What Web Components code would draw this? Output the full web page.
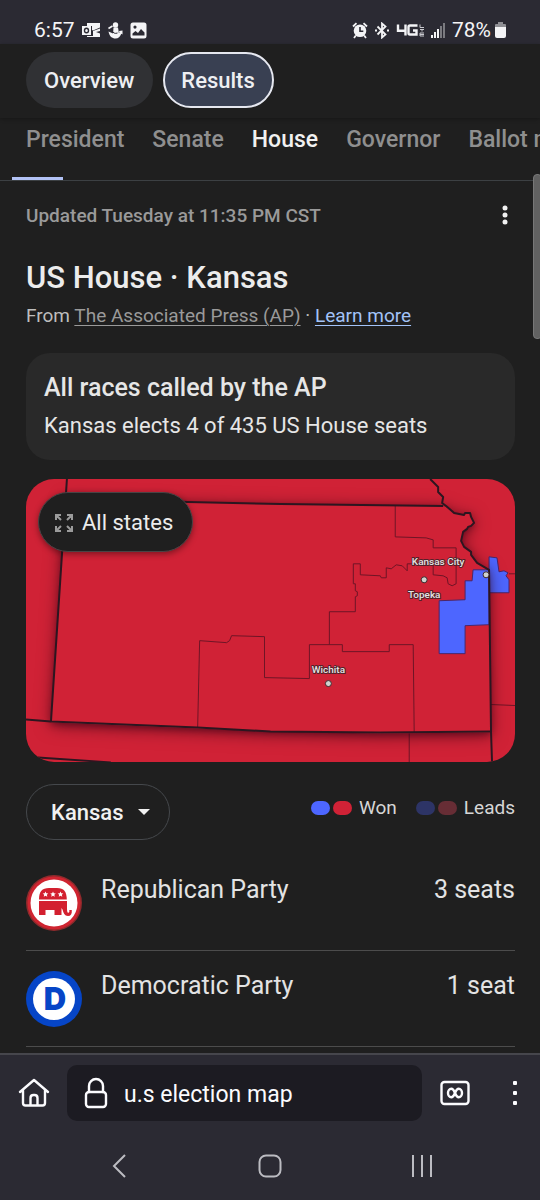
<!DOCTYPE html>
<html lang="en">
<head>
  <meta charset="utf-8">
  <meta name="viewport" content="width=device-width, initial-scale=1">
  <title>u.s election map</title>
  <style>
    html {
      background-color: #1f1f1f;
    }

    body {
      margin: 0;
      min-height: 100vh;
      display: flex;
      flex-direction: column;
      overflow-x: hidden;
      background-color: #1f1f1f;
      color: #e8e8e8;
      font-family: Roboto, "Liberation Sans", sans-serif;
    }

    main {
      flex: 1;
      position: relative;
    }
  </style>
</head>
<body>
  <st-status-bar time="6:57" battery="78%"></st-status-bar>
  <main>
    <st-chip-bar>
      <st-chip>Overview</st-chip>
      <st-chip selected>Results</st-chip>
    </st-chip-bar>
    <st-race-tabs></st-race-tabs>
    <st-results-panel>
      <st-update-line slot="top">Updated Tuesday at 11:35 PM CST</st-update-line>
      <st-race-title slot="top">US House · Kansas</st-race-title>
      <st-called-card slot="top">
        <span slot="heading">All races called by the AP</span>
        Kansas elects 4 of 435 US House seats
      </st-called-card>
      <st-district-map></st-district-map>
      <st-map-controls></st-map-controls>
      <st-party-row party="rep" seats="3 seats">Republican Party</st-party-row>
      <st-party-row party="dem" seats="1 seat">Democratic Party</st-party-row>
    </st-results-panel>
    <st-scroll-thumb></st-scroll-thumb>
  </main>
  <st-browser-bar query="u.s election map"></st-browser-bar>
  <st-system-nav></st-system-nav>

  <script>
    class StatusBar extends HTMLElement {
      constructor() {
        super();

        this.attachShadow({ mode: 'open' });
        this.shadowRoot.innerHTML = `
          <style>
            :host {
              display: flex;
              justify-content: space-between;
              align-items: center;
              height: 28px;
              padding: 16px 34px 0 34px;
              background-color: #2b2a33;
              color: #f4f4f6;
              font-size: 21px;
              line-height: 28px;
            }

            .group {
              display: flex;
              align-items: center;
              gap: 7px;
            }

            .power {
              display: flex;
              align-items: center;
              gap: 4px;
            }

            svg {
              display: block;
              fill: #f4f4f6;
            }
          </style>
          <div class="group">
            <span>${this.getAttribute('time')}</span>
            <svg width="19" height="16" viewBox="0 0 19 16">
              <path d="M5 1h13v4.500l-7 3-1-.5V4H5z"/>
              <path d="M0 4h9v9H0zM18 6.500v2.500l-4 1 4 1.500V15H5v-1h6V9z"/>
              <ellipse cx="4.500" cy="8.500" rx="2" ry="2.300" fill="none" stroke="#2b2a33" stroke-width="1.400"/>
            </svg>
            <svg width="15" height="17" viewBox="0 0 15 17">
              <circle cx="7.500" cy="3" r="2.700"/>
              <path d="M5.500 5.500h4.500l.5 3 .5 3.500H5z"/>
              <path d="M.5 9.500l3.500 1.500c2 1.500 5 1.500 7.500-.5l-.5-1.500 3.500-.5v4l-1.200-.8c-1.300 3-2.800 4.800-5.800 4.800-3.500 0-6-2-7-7z"/>
              <path d="M.5 6.500L4.500 4" stroke="#f4f4f6" stroke-width="1.600"/>
              <path d="M4 8.500c1 2.500 3 3.500 5.500 2.500" fill="none" stroke="#2b2a33"/>
            </svg>
            <svg width="17" height="17" viewBox="0 0 17 17">
              <path fill-rule="evenodd" d="M3 .5h11a2.500 2.500 0 0 1 2.500 2.500v11a2.500 2.500 0 0 1-2.500 2.500H3A2.500 2.500 0 0 1 .5 14V3A2.500 2.500 0 0 1 3 .5zM2.500 13.500h12v-3l-3.500-3.500-3 4-2.500-2-3 2.500zM5 3.500a1.600 1.600 0 1 0 0 3.200 1.600 1.600 0 0 0 0-3.200z"/>
            </svg>
          </div>
          <div class="group">
            <svg width="16" height="17" viewBox="0 0 16 17">
              <circle cx="8" cy="8.800" r="6.300"/>
              <path d="M1 4.500L4.500 1.200M15 4.500l-3.500-3.300M3.800 13.500L2 16M12.200 13.500L14 16" fill="none" stroke="#f4f4f6" stroke-width="1.800"/>
              <path d="M8 5v4.300h3.300" fill="none" stroke="#2b2a33" stroke-width="1.600"/>
            </svg>
            <svg width="14" height="17" viewBox="0 0 14 17">
              <path d="M2.500 4.500l8 8-3.500 3V1.500l3.500 3-8 8" fill="none" stroke="#f4f4f6" stroke-width="1.800"/>
              <path d="M0 7.500h2v2H0zM12 7.500h2v2h-2z"/>
            </svg>
            <svg width="28" height="14" viewBox="0 0 28 14">
              <path d="M2 1.500v6.200h8.500M9.500 1.500v11M21.500 2.500H14q-1.500 0-1.500 1.500v6q0 1.500 1.500 1.500h6.500V7.500H17" fill="none" stroke="#f4f4f6" stroke-width="2.400"/>
              <path d="M24 1.500v3h4M24 6.500h4M26 6.500v2M28 10h-4v3h4M24 11.500h4" fill="none" stroke="#c9c9cf" stroke-width="1"/>
            </svg>
            <svg width="14" height="15" viewBox="0 0 14 15">
              <path d="M0 12h2v3H0zM3 9h2v6H3zM6 6h2v9H6z"/>
              <path d="M9 3h2v12H9zM12 0h2v15h-2z" opacity=".4"/>
            </svg>
            <div class="power">
              <span>${this.getAttribute('battery')}</span>
              <svg width="11" height="16" viewBox="0 0 11 16">
                <path d="M3 0h5v2h2q1 0 1 1v3H0V3q0-1 1-1h2z" opacity=".5"/>
                <path d="M0 5h11v9q0 2-2 2H2q-2 0-2-2z"/>
              </svg>
            </div>
          </div>
        `;
      }
    }

    class ChipBar extends HTMLElement {
      constructor() {
        super();

        this.attachShadow({ mode: 'open' });
        this.shadowRoot.innerHTML = `
          <style>
            :host {
              display: flex;
              gap: 10px;
              padding: 8px 26px 10px;
              box-shadow: 0 1px 4px rgba(0, 0, 0, .3);
            }
          </style>
          <slot></slot>
        `;
      }
    }

    class Chip extends HTMLElement {
      constructor() {
        super();

        this.attachShadow({ mode: 'open' });
        this.shadowRoot.innerHTML = `
          <style>
            :host {
              display: block;
            }

            button {
              height: 56px;
              padding: 2px 17px 0 16px;
              border: 2px solid transparent;
              border-radius: 28px;
              background-color: #303134;
              color: #eeeff2;
              font: 500 22px/28px Roboto, "Liberation Sans", sans-serif;
            }

            :host([selected]) button {
              border-color: #e6e8f0;
              background-color: #394052;
            }
          </style>
          <button><slot></slot></button>
        `;
      }
    }

    class RaceTabs extends HTMLElement {
      constructor() {
        super();

        this.races = ['President', 'Senate', 'House', 'Governor', 'Ballot measures'];
        this.current = 'House';

        this.attachShadow({ mode: 'open' });
        this.shadowRoot.innerHTML = `
          <style>
            :host {
              display: block;
              position: relative;
              border-bottom: 1px solid #3c4043;
            }

            nav {
              display: flex;
              gap: 28px;
              padding: 8px 0 26px 26px;
              overflow: hidden;
            }

            a {
              flex: none;
              color: #8f8f8f;
              font-size: 23px;
              font-weight: 500;
              line-height: 28px;
              text-decoration: none;
              white-space: nowrap;
            }

            a[aria-current] {
              color: #f1f1f1;
            }

            .indicator {
              position: absolute;
              left: 12px;
              bottom: 0;
              width: 51px;
              height: 3px;
              background-color: #b2c2f5;
            }
          </style>
          <nav>
            ${this.races.map(race => `<a href="#"${race === this.current ? ' aria-current="page"' : ''}>${race}</a>`).join('')}
          </nav>
          <div class="indicator"></div>
        `;
      }
    }

    class ResultsPanel extends HTMLElement {
      constructor() {
        super();

        this.attachShadow({ mode: 'open' });
        this.shadowRoot.innerHTML = `
          <style>
            :host {
              display: block;
              padding: 21px 25px 6px 26px;
            }
          </style>
          <slot name="top"></slot>
          <slot></slot>
        `;
      }
    }

    class UpdateLine extends HTMLElement {
      constructor() {
        super();

        this.attachShadow({ mode: 'open' });
        this.shadowRoot.innerHTML = `
          <style>
            :host {
              display: flex;
              justify-content: space-between;
              align-items: center;
              color: #9a9a9a;
              font-size: 19px;
              font-weight: 500;
              line-height: 28px;
            }

            button {
              display: block;
              padding: 0;
              border: none;
              background: none;
            }

            svg {
              display: block;
            }
          </style>
          <span><slot></slot></span>
          <button aria-label="More options">
            <svg width="20" height="28" viewBox="0 0 20 28" fill="#f1f1f1">
              <circle cx="10" cy="6" r="2.500"/>
              <circle cx="10" cy="13" r="2.500"/>
              <circle cx="10" cy="20" r="2.500"/>
            </svg>
          </button>
        `;
      }
    }

    class RaceTitle extends HTMLElement {
      constructor() {
        super();

        this.attachShadow({ mode: 'open' });
        this.shadowRoot.innerHTML = `
          <style>
            :host {
              display: block;
              margin-top: 28px;
            }

            h1 {
              margin: 0;
              color: #ececec;
              font-size: 31px;
              font-weight: 500;
              line-height: 40px;
            }

            p {
              margin: 4px 0 0;
              color: #bdbdbd;
              font-size: 19px;
              line-height: 28px;
            }

            a {
              text-underline-offset: 3px;
              text-decoration-thickness: 1px;
            }

            .source {
              color: #9a9a9a;
            }

            .more {
              color: #a3c3f8;
            }
          </style>
          <h1><slot></slot></h1>
          <p>From <a class="source" href="#">The Associated Press (AP)</a> · <a class="more" href="#">Learn more</a></p>
        `;
      }
    }

    class CalledCard extends HTMLElement {
      constructor() {
        super();

        this.attachShadow({ mode: 'open' });
        this.shadowRoot.innerHTML = `
          <style>
            :host {
              display: block;
              margin-top: 23px;
              padding: 19px 18px 20px;
              border-radius: 24px;
              background-color: #292929;
              color: #e6e6e6;
            }

            h2 {
              margin: 0 0 8px;
              font-size: 25px;
              font-weight: 500;
              line-height: 32px;
            }

            p {
              margin: 0;
              font-size: 22px;
              line-height: 28px;
            }
          </style>
          <h2><slot name="heading"></slot></h2>
          <p><slot></slot></p>
        `;
      }
    }

    class DistrictMap extends HTMLElement {
      constructor() {
        super();

        this.attachShadow({ mode: 'open' });
        this.shadowRoot.innerHTML = `
          <style>
            :host {
              display: block;
              position: relative;
              margin-top: 19px;
              border-radius: 28px;
              overflow: hidden;
            }

            .map {
              display: block;
              width: 100%;
              height: auto;
              background-color: #d02236;
            }

            .state {
              fill: #d02236;
              filter: drop-shadow(0 2px 3px rgba(50, 0, 20, .4)) drop-shadow(0 2px 8px rgba(50, 0, 20, .6));
            }

            .border {
              fill: none;
              stroke: #2c1620;
              stroke-width: 2;
              stroke-linejoin: round;
            }

            .district {
              fill: none;
              stroke: #6e1526;
              stroke-width: 1;
            }

            .dem {
              fill: #4d66ff;
              stroke: #4a2668;
              stroke-width: 1;
            }

            .city {
              fill: #cfd2cf;
              stroke: #3d2a2d;
              stroke-width: 1;
            }

            .name {
              fill: #e4e4e4;
              stroke: #55202a;
              stroke-width: 2;
              stroke-linejoin: round;
              paint-order: stroke;
              font-size: 10px;
              font-weight: 500;
              text-anchor: middle;
            }

            button {
              position: absolute;
              top: 13px;
              left: 12px;
              display: flex;
              align-items: center;
              gap: 9px;
              height: 60px;
              padding: 2px 19px 0 16px;
              border: 1px solid #4a4345;
              border-radius: 30px;
              background-color: #1f1f1f;
              box-shadow: 0 2px 6px rgba(0, 0, 0, .4);
              color: #ececec;
              font: 22px/28px Roboto, "Liberation Sans", sans-serif;
            }
          </style>
          <svg class="map" viewBox="0 0 490 284" role="img" aria-label="Kansas districts">
            <path class="dem" d="M464 78l8 1 2 14 5-1 4 2-2 3 3 4v13h-20z"/>
            <path class="district" d="M484 95h6M466 226l24 1M384 254v30"/>
            <path class="state" d="M40 18L162 23l93 2 163 2 3 1 8 6 10 2 1-2h5l1 4 3 6-3 3-3 1-1 2-4 3-2 9 3 6 7 5v3l6 8 12 7 2 163-111 1-110-2-73-3-147-6z"/>
            <path class="dem" d="M414 122l26-1v-19h7l1-11h16v55l-24 1v28h-26z"/>
            <path class="district" d="M172 249l2-87 27 2 3-2 2-5 33 1v41l45 1v-34h33v7h47v-7h24l1 88"/>
            <path class="district" d="M304 166v-33h26v-15l2-1v-4l-2-1v-7h-2V85h7v11l20 1 1 2h5V89l5 1 5-4 6 1 5 5V85h26v11l10 1 4 2 1 6 4 2 4-2V69h-23v-8l-7-2-31-1V27"/>
            <path class="border" d="M41 0L25 243M40 18L162 23l93 2 163 2"/>
            <path class="border" d="M405 0l8 8v5l5 5-1 6 4 3 8 7 10 2 1-2h5l1 4 3 6-3 3-3 1-1 2-4 3-2 9 3 6 7 5v3l6 8 12 7 2 163 1 30"/>
            <path class="border" d="M0 241l25 2 147 6 73 4 110 1 111-1M12 279l73 5"/>
            <circle class="city" cx="461" cy="96" r="3"/>
            <circle class="city" cx="399" cy="101" r="3"/>
            <circle class="city" cx="303" cy="205" r="3"/>
            <text class="name" x="413" y="86">Kansas City</text>
            <text class="name" x="399" y="119">Topeka</text>
            <text class="name" x="303" y="194">Wichita</text>
          </svg>
          <button>
            <svg width="18" height="18" viewBox="0 0 18 18" fill="none" stroke="#9b9b9b" stroke-width="2">
              <path d="M1 6V1h5M1 1l5 5M12 1h5v5M17 1l-5 5M1 12v5h5M1 17l5-5M12 17h5v-5M17 17l-5-5"/>
            </svg>
            All states
          </button>
        `;
      }
    }

    class MapControls extends HTMLElement {
      constructor() {
        super();

        this.attachShadow({ mode: 'open' });
        this.shadowRoot.innerHTML = `
          <style>
            :host {
              display: flex;
              justify-content: space-between;
              align-items: flex-start;
              margin: 22px 0 15px;
            }

            .picker {
              position: relative;
              display: flex;
              align-items: center;
            }

            select {
              appearance: none;
              height: 56px;
              padding: 2px 45px 0 24px;
              border: 1px solid #45484c;
              border-radius: 28px;
              background-color: transparent;
              color: #f1f1f1;
              font: 500 22px/28px Roboto, "Liberation Sans", sans-serif;
            }

            .arrow {
              position: absolute;
              right: 20px;
              pointer-events: none;
            }

            ul {
              display: flex;
              gap: 19px;
              margin: 0;
              padding: 10px 0 0;
              list-style: none;
              color: #d6d6d6;
              font-size: 19px;
              line-height: 28px;
            }

            li {
              display: flex;
              align-items: center;
              gap: 3px;
            }

            i {
              width: 19px;
              height: 14px;
              border-radius: 7px;
            }

            .label {
              margin-left: 4px;
            }
          </style>
          <div class="picker">
            <select aria-label="State">
              <option>Kansas</option>
            </select>
            <svg class="arrow" width="12" height="6" viewBox="0 0 12 6" fill="#f1f1f1"><path d="M0 0h12L6 6z"/></svg>
          </div>
          <ul>
            <li><i style="background-color: #4d66ff"></i><i style="background-color: #d02236"></i><span class="label">Won</span></li>
            <li><i style="background-color: #2d3466"></i><i style="background-color: #672d35"></i><span class="label">Leads</span></li>
          </ul>
        `;
      }
    }

    const partyLogos = {
      rep: `
        <circle cx="28" cy="28" r="28" fill="#8f2a2c"/>
        <circle cx="28" cy="28" r="26.500" fill="#cf2430"/>
        <circle cx="28" cy="28" r="23.500" fill="#fff"/>
        <g fill="#d3202f">
          <path d="M13 24.500c0-8 3-11.500 10-11.500h8c7 0 9.500 3.500 9.800 11.500z"/>
          <path d="M13 26h28v6.500c0 4.500.500 5.200 1.300 5.200 1 0 1.200-1 1-2.700h2.500c.3 4-1 6-3.800 6-3.500 0-4.500-3-5.500-6.500l-1-1.500v7h-7v-5h-9v5H13z"/>
        </g>
        <path fill="#fff" d="M19.500 16.500l.8 1.800 2 .2-1.500 1.300.5 2-1.800-1-1.800 1 .5-2-1.500-1.300 2-.2zM27 16.500l.8 1.800 2 .2-1.500 1.300.5 2-1.800-1-1.800 1 .5-2-1.500-1.300 2-.2zM34.500 16.500l.8 1.800 2 .2-1.500 1.300.5 2-1.800-1-1.800 1 .5-2-1.500-1.300 2-.2z"/>`,
      dem: `
        <circle cx="28" cy="28" r="28" fill="#0645c7"/>
        <circle cx="28" cy="28" r="21" fill="#fff"/>
        <text x="29" y="39" text-anchor="middle" font-family="Inter, sans-serif" font-size="31" font-weight="900" fill="#0645c7">D</text>`
    };

    class PartyRow extends HTMLElement {
      constructor() {
        super();

        this.attachShadow({ mode: 'open' });
        this.shadowRoot.innerHTML = `
          <style>
            :host {
              display: flex;
              align-items: flex-start;
              padding: 20px 0 19px;
              border-bottom: 1px solid #4c4c4c;
              color: #e3e3e3;
              font-size: 25px;
              line-height: 30px;
            }

            svg {
              display: block;
              margin-right: 19px;
            }

            .name {
              flex: 1;
            }
          </style>
          <svg width="56" height="56" viewBox="0 0 56 56" aria-hidden="true">${partyLogos[this.getAttribute('party')]}</svg>
          <span class="name"><slot></slot></span>
          <span>${this.getAttribute('seats')}</span>
        `;
      }
    }

    class ScrollThumb extends HTMLElement {
      constructor() {
        super();

        this.attachShadow({ mode: 'open' });
        this.shadowRoot.innerHTML = `
          <style>
            /* overlay scrollbar, drawn over the page */
            :host {
              position: absolute;
              top: 130px;
              right: -2px;
              width: 9px;
              height: 165px;
              border: 1px solid #777;
              box-sizing: border-box;
              border-radius: 4px;
              background-color: #616161;
            }
          </style>
        `;
      }
    }

    class BrowserBar extends HTMLElement {
      constructor() {
        super();

        this.attachShadow({ mode: 'open' });
        this.shadowRoot.innerHTML = `
          <style>
            :host {
              display: flex;
              align-items: center;
              padding: 10px 14px 11px 18px;
              border-top: 2px solid #46464c;
              background-color: #2b2a33;
            }

            button {
              display: block;
              padding: 0;
              border: none;
              background: none;
            }

            svg {
              display: block;
              fill: none;
              stroke: #fbfbfe;
              stroke-width: 2.400;
              stroke-linejoin: round;
              stroke-linecap: round;
            }

            .address {
              flex: 1;
              min-width: 0;
              display: flex;
              align-items: center;
              gap: 16px;
              height: 56px;
              margin: 0 18px 0 17px;
              padding: 0 17px;
              border-radius: 10px;
              background-color: #1c1b22;
            }

            input {
              flex: 1;
              min-width: 0;
              padding: 4px 0 0;
              border: none;
              outline: none;
              background: none;
              color: #fbfbfe;
              font: 23px/30px Roboto, "Liberation Sans", sans-serif;
            }

            .menu {
              margin-left: 34px;
            }

            .menu svg {
              fill: #fbfbfe;
              stroke: none;
            }
          </style>
          <button aria-label="Home">
            <svg width="32" height="30" viewBox="0 0 32 30">
              <path d="M2 14L16 2l14 12M5 12v13q0 2.500 2.500 2.500h17q2.500 0 2.500-2.500V12M12.500 27v-7q0-3 3-3h1q3 0 3 3v7"/>
            </svg>
          </button>
          <div class="address">
            <svg width="24" height="32" viewBox="0 0 24 32">
              <rect x="2" y="15" width="20" height="15" rx="3"/>
              <path d="M5 15V9a7 7 0 0 1 14 0v6"/>
            </svg>
            <input type="text" aria-label="Address" value="${this.getAttribute('query')}">
          </div>
          <button aria-label="Tabs">
            <svg width="30" height="26" viewBox="0 0 30 26">
              <rect x="1.500" y="2" width="27" height="22" rx="3"/>
              <path d="M15 13c-1-2.500-2-4.200-3.700-4.200-1.800 0-3.300 1.800-3.300 4.200s1.500 4.200 3.300 4.200c1.700 0 2.700-1.700 3.700-4.200s2-4.200 3.700-4.200c1.800 0 3.300 1.800 3.300 4.200s-1.500 4.200-3.300 4.200c-1.700 0-2.700-1.700-3.700-4.200z"/>
            </svg>
          </button>
          <button class="menu" aria-label="Menu">
            <svg width="22" height="26" viewBox="0 0 22 26">
              <rect x="9" y="1" width="4" height="4" rx="1"/>
              <rect x="9" y="11" width="4" height="4" rx="1"/>
              <rect x="9" y="21" width="4" height="4" rx="1"/>
            </svg>
          </button>
        `;
      }
    }

    class SystemNav extends HTMLElement {
      constructor() {
        super();

        this.attachShadow({ mode: 'open' });
        this.shadowRoot.innerHTML = `
          <style>
            :host {
              display: flex;
              justify-content: center;
              align-items: center;
              height: 68px;
              background-color: #2b2a33;
            }

            button {
              flex: 0 1 28%;
              display: flex;
              justify-content: center;
              padding: 0;
              border: none;
              background: none;
            }

            svg {
              display: block;
              fill: none;
              stroke: #bcbcc2;
              stroke-width: 2;
            }
          </style>
          <button aria-label="Back"><svg width="24" height="24" viewBox="0 0 24 24"><path d="M18 1L7 12l11 11"/></svg></button>
          <button aria-label="Home"><svg width="24" height="24" viewBox="0 0 24 24"><rect x="1.500" y="1.500" width="21" height="21" rx="6.500"/></svg></button>
          <button aria-label="Recent apps"><svg width="24" height="24" viewBox="0 0 24 24"><path d="M4 1v22M13 1v22M22 1v22"/></svg></button>
        `;
      }
    }

    window.customElements.define('st-status-bar', StatusBar);
    window.customElements.define('st-chip-bar', ChipBar);
    window.customElements.define('st-chip', Chip);
    window.customElements.define('st-race-tabs', RaceTabs);
    window.customElements.define('st-results-panel', ResultsPanel);
    window.customElements.define('st-update-line', UpdateLine);
    window.customElements.define('st-race-title', RaceTitle);
    window.customElements.define('st-called-card', CalledCard);
    window.customElements.define('st-district-map', DistrictMap);
    window.customElements.define('st-map-controls', MapControls);
    window.customElements.define('st-party-row', PartyRow);
    window.customElements.define('st-scroll-thumb', ScrollThumb);
    window.customElements.define('st-browser-bar', BrowserBar);
    window.customElements.define('st-system-nav', SystemNav);
  </script>
</body>
</html>
